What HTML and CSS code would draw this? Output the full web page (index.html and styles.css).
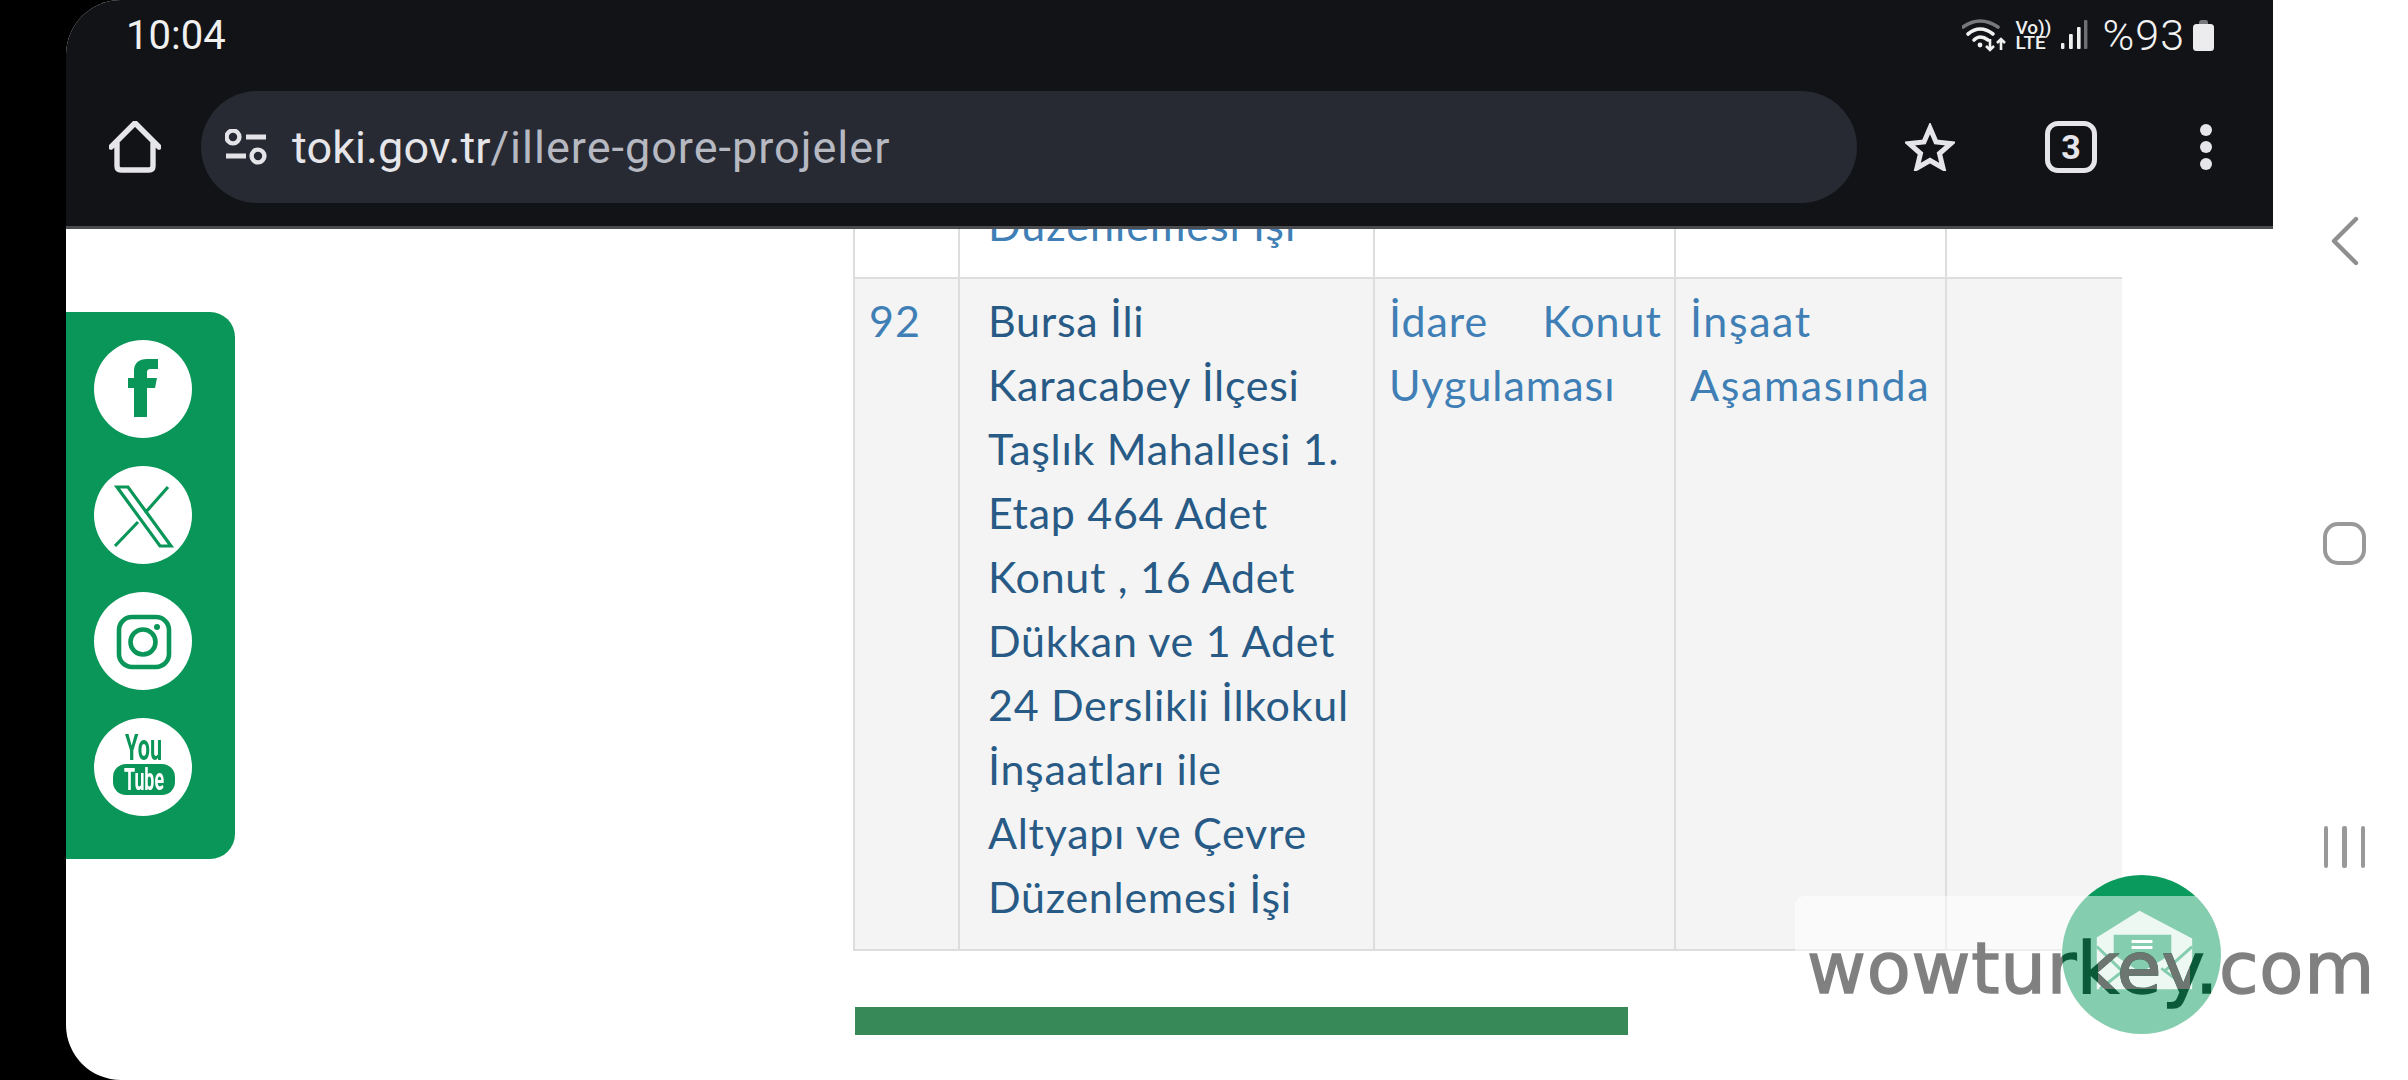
FILE: index.html
```html
<!DOCTYPE html>
<html lang="tr">
<head>
<meta charset="utf-8">
<title>toki.gov.tr</title>
<link rel="stylesheet" href="styles.css">
</head>
<body>
<div class="screen">
  <div class="browser">
    <header class="chrome">
      <div class="status">
        <span class="clock">10:04</span>
        <div class="status-right">
          <svg class="wifi" viewBox="0 0 46 33" width="46" height="33">
            <path class="dim" d="M1 8Q18 -4 36 8"/>
            <path d="M6 15Q18 5 31 15M12 21Q18 15 26 21"/>
            <circle cx="18" cy="26" r="2.4" class="fill"/>
            <path class="thin" d="M28 20V31M24 27L28 31L32 27M39 31V20M35 24L39 20L43 24"/>
          </svg>
          <div class="volte"><span>Vo))</span><span>LTE</span></div>
          <svg class="signal" viewBox="0 0 28 30" width="28" height="30">
            <rect x="0" y="23" width="3.4" height="6" rx="1" class="fill"/>
            <rect x="8" y="14" width="3.8" height="15" rx="1" class="fill"/>
            <rect x="16" y="7" width="3.6" height="22" rx="1" class="fill"/>
            <rect x="23" y="0" width="3.4" height="29" rx="1" fill="#6f7074"/>
          </svg>
          <span class="percent">%93</span>
          <svg class="battery" viewBox="0 0 21 31" width="21" height="31">
            <path fill="#77787b" d="M6 3Q6 0 9 0H13Q15 0 15 3V5H6Z"/>
            <rect x="0" y="4" width="21" height="27" rx="3.5" fill="#ececee"/>
          </svg>
        </div>
      </div>
      <div class="toolbar">
        <div class="home">
          <svg viewBox="0 0 52 52" width="52" height="52">
            <path d="M2 26L26 2L50 26M8 22V45Q8 49 12 49H40Q44 49 44 45V22"/>
          </svg>
        </div>
        <div class="url">
          <svg class="tune" viewBox="0 0 42 36" width="42" height="36">
            <circle cx="8" cy="8" r="6.4"/>
            <path d="M21 8H41M1 27H21"/>
            <circle cx="33" cy="27" r="6.4"/>
          </svg>
          <span class="url-text"><span class="host">toki.gov.tr</span>/illere-gore-projeler</span>
        </div>
        <div class="action act-star">
          <svg viewBox="0 0 50 48" width="50" height="48">
            <path d="M25 5L31 19L46 20.5L34.5 30.5L38 45L25 37.5L12 45L15.5 30.5L4 20.5L19 19Z"/>
          </svg>
        </div>
        <div class="action act-tabs"><span class="tabs">3</span></div>
        <div class="action act-menu"><span class="dots"><i></i><i></i><i></i></span></div>
      </div>
    </header>
    <main class="page">
      <aside class="social">
        <span class="social-btn">
          <svg viewBox="0 0 98 98"><path class="g" d="M40 77V48H34V38H40V31C40 23 45 19 53 19H64V29H57C54 29 53 30 53 33V38H63L61 48H53V77Z"/></svg>
        </span>
        <span class="social-btn">
          <svg viewBox="0 0 98 98"><path class="o" d="M23 21H34L77 80H66ZM74 21L51 47M44 56L21 80"/></svg>
        </span>
        <span class="social-btn">
          <svg viewBox="0 0 98 98">
            <rect class="o4" x="25" y="25" width="50" height="50" rx="13"/>
            <circle class="o4" cx="49" cy="50" r="12.5"/>
            <circle class="g" cx="63" cy="35" r="3"/>
          </svg>
        </span>
        <span class="social-btn">
          <svg viewBox="0 0 98 98">
            <text class="yt" x="31" y="42" textLength="37" lengthAdjust="spacingAndGlyphs">You</text>
            <rect class="g" x="19" y="46" width="62" height="31" rx="13"/>
            <text class="yt light" x="30" y="72" textLength="40" lengthAdjust="spacingAndGlyphs">Tube</text>
          </svg>
        </span>
      </aside>
      <section class="content">
        <table class="projects">
          <colgroup>
            <col class="c-no"><col class="c-name"><col class="c-type"><col class="c-state"><col class="c-last">
          </colgroup>
          <tbody>
            <tr>
              <td></td>
              <td class="lnk">Düzenlemesi İşi</td>
              <td></td><td></td><td></td>
            </tr>
            <tr class="alt">
              <td class="lnk">92</td>
              <td class="name">Bursa İli Karacabey İlçesi Taşlık Mahallesi 1. Etap 464 Adet Konut , 16 Adet Dükkan ve 1 Adet 24 Derslikli İlkokul İnşaatları ile Altyapı ve Çevre Düzenlemesi İşi</td>
              <td class="lnk just">İdare Konut Uygulaması</td>
              <td class="lnk wide">İnşaat Aşamasında</td>
              <td></td>
            </tr>
          </tbody>
        </table>
        <div class="green-bar"></div>
      </section>
    </main>
  </div>
  <nav class="gesture">
    <div class="g-cell">
      <svg viewBox="0 0 30 50" width="30" height="50"><path d="M26 3L4 25L26 47"/></svg>
    </div>
    <div class="g-cell"><span class="g-square"></span></div>
    <div class="g-cell"><span class="g-bars"><i></i><i></i><i></i></span></div>
  </nav>

  <div class="mail-btn">
    <svg viewBox="0 0 160 160" width="159" height="159">
      <path fill="#fff" fill-opacity=".85" d="M78 36L35 63V115H131V64Z"/>
      <path fill="#0b9a5e" d="M52 60H110V80L79 98L52 80Z"/>
      <path stroke="#fff" stroke-width="3" d="M70 67H91M70 73H91"/>
      <path stroke="#0b9a5e" stroke-width="3" fill="none" d="M35 72L62 98M38 115L62 96M131 72L104 96M128 115L100 94"/>
    </svg>
  </div>
  <div class="watermark"><span class="wm-text">wowturkey.com</span></div>
</div>
</body>
</html>
```
FILE: styles.css
```css
* { box-sizing: border-box; }
html, body { margin: 0; height: 100%; }
body { background: #000; padding-left: 66px; overflow: hidden; font-family: "Lato", "Liberation Sans", sans-serif; }

.screen {
  position: relative;
  display: flex;
  width: 2342px;
  height: 1080px;
  background: #fff;
  border-radius: 55px 0 0 55px;
  overflow: hidden;
}
.browser { flex: none; width: 2207px; height: 1080px; display: flex; flex-direction: column; }

.chrome {
  flex: none;
  height: 229px;
  background: #121317;
  border-bottom: 3px solid #4b4c50;
  font-family: "Roboto", sans-serif;
  color: #eee;
}
.status {
  height: 91px;
  padding: 0 59px 21px 60px;
  display: flex;
  justify-content: space-between;
  align-items: center;
}
.clock { font-size: 40px; font-weight: 400; color: #f0f0f0; }
.status-right { display: flex; align-items: center; }
.wifi { margin-right: 8px; }
.wifi path { fill: none; stroke: #f0f0f0; stroke-width: 3.6; stroke-linecap: round; }
.wifi .dim { stroke: #77787b; }
.wifi .thin { stroke-width: 2.6; stroke-linecap: butt; }
.fill { fill: #f0f0f0; }
.volte { display: flex; flex-direction: column; font-size: 19px; line-height: 15px; font-weight: 500; margin-right: 13px; width: 32px; color: #f0f0f0; }
.signal { margin-right: 14px; }
.percent { font-size: 43px; font-weight: 300; color: #f2f2f2; margin-right: 8px; letter-spacing: 1px; }

.toolbar { display: flex; height: 112px; }
.home { flex: none; width: 135px; padding-left: 2px; display: flex; align-items: center; justify-content: center; }
.home svg path { fill: none; stroke: #e6e6ea; stroke-width: 5.4; stroke-linecap: round; stroke-linejoin: round; }
.url {
  flex: none;
  width: 1656px;
  height: 112px;
  border-radius: 56px;
  background: #272a33;
  display: flex;
  align-items: center;
  padding-left: 24px;
}
.tune { flex: none; margin-right: 25px; }
.tune circle { fill: none; stroke: #e3e3e8; stroke-width: 4.4; }
.tune path { fill: none; stroke: #e3e3e8; stroke-width: 5; }
.url-text { font-size: 45px; color: #b6b9c1; white-space: nowrap; letter-spacing: 1px; }
.host { color: #e6e6ea; letter-spacing: .1px; }
.action { flex: none; display: flex; align-items: center; justify-content: center; }
.act-star { width: 145px; }
.act-tabs { width: 138px; }
.act-menu { width: 131px; }
.act-star path { fill: none; stroke: #e6e6ea; stroke-width: 5; stroke-linejoin: miter; }
.tabs {
  width: 52px; height: 52px;
  border: 5px solid #e6e6ea;
  border-radius: 13px;
  display: flex; align-items: center; justify-content: center;
  font-size: 34px; font-weight: 700; color: #e6e6ea;
}
.dots { display: flex; flex-direction: column; gap: 5px; }
.dots i { width: 12px; height: 12px; border-radius: 50%; background: #e6e6ea; }

.page { flex: 1; display: flex; align-items: flex-start; overflow: hidden; }
.social {
  flex: none;
  width: 169px;
  height: 547px;
  margin-top: 83px;
  background: #0b9659;
  border-radius: 0 25px 25px 0;
  padding: 28px 0 0 28px;
  display: flex;
  flex-direction: column;
  gap: 28px;
}
.social-btn { width: 98px; height: 98px; background: #fff; border-radius: 50%; display: block; }
.social-btn svg { display: block; width: 98px; height: 98px; filter: blur(.5px); }
.g { fill: #0b9659; }
.o { fill: none; stroke: #0b9659; stroke-width: 3.2; }
.o4 { fill: none; stroke: #0b9659; stroke-width: 4.6; }
.yt { font-family: "Roboto", sans-serif; font-size: 36px; font-weight: 700; fill: #0b9659; }
.yt.light { fill: #fff; font-size: 31px; }

.content { flex: none; margin: -48px 0 0 618px; width: 1268px; }
.projects {
  border-collapse: collapse;
  table-layout: fixed;
  width: 1268px;
  font-size: 43px;
  line-height: 64px;
  letter-spacing: 1px;
  color: #337ab7;
}
.c-no { width: 105px; }
.c-name { width: 415px; }
.c-type { width: 301px; }
.c-state { width: 271px; }
.c-last { width: 176px; }
.projects td { border: 2px solid #ddd; padding: 10px 16px 20px 14px; vertical-align: top; }
.projects td:last-child { border-right: 0; }
.projects td:first-child { padding-left: 14px; }
.projects td:nth-child(2) { padding-left: 28px; padding-right: 14px; }
.projects td.just { padding-right: 12px; }
.projects td.wide { letter-spacing: 1.6px; padding-right: 8px; }
.projects td.name { letter-spacing: .7px; }
.lnk { color: #3f7fb5; }
.name { color: #285a86; }
.just { text-align: justify; }
.alt td { background: #f4f4f4; }
.green-bar { width: 773px; height: 28px; margin: 56px 0 0 2px; background: #388958; }

.gesture { flex: 1; padding: 89px 0 0 8px; display: flex; flex-direction: column; }
.g-cell { height: 303px; display: flex; align-items: center; justify-content: center; }
.g-cell path { fill: none; stroke: #8f8f8f; stroke-width: 4.4; stroke-linecap: round; stroke-linejoin: round; }
.g-square { width: 43px; height: 43px; border: 4.5px solid #999; border-radius: 15px; }
.g-bars { display: flex; gap: 14px; }
.g-bars i { width: 4.5px; height: 42px; background: #999; border-radius: 2px; }

.mail-btn {
  position: absolute;
  left: 1996px;
  top: 875px;
  width: 159px;
  height: 159px;
  border-radius: 50%;
  background: #0b9a5e;
}
.mail-btn svg { display: block; }
.watermark {
  position: absolute;
  left: 1729px;
  top: 896px;
  width: 613px;
  height: 144px;
  background: rgba(255, 255, 255, .5);
  border-radius: 9px 0 0 0;
  padding: 27px 0 0 12px;
}
.wm-text {
  display: block;
  width: 590px;
  height: 90px;
  font-family: "DejaVu Sans", sans-serif;
  font-size: 72px;
  line-height: 90px;
  letter-spacing: .8px;
  white-space: nowrap;
  color: transparent;
  -webkit-text-stroke: 1.5px transparent;
  background:
    linear-gradient(#6e7672, #6e7672) 291px 0 / 92px 66px no-repeat,
    radial-gradient(circle 79.5px at 334.5px 32px, #0a5a38 99%, #808080 100%);
  -webkit-background-clip: text;
  background-clip: text;
}
```
